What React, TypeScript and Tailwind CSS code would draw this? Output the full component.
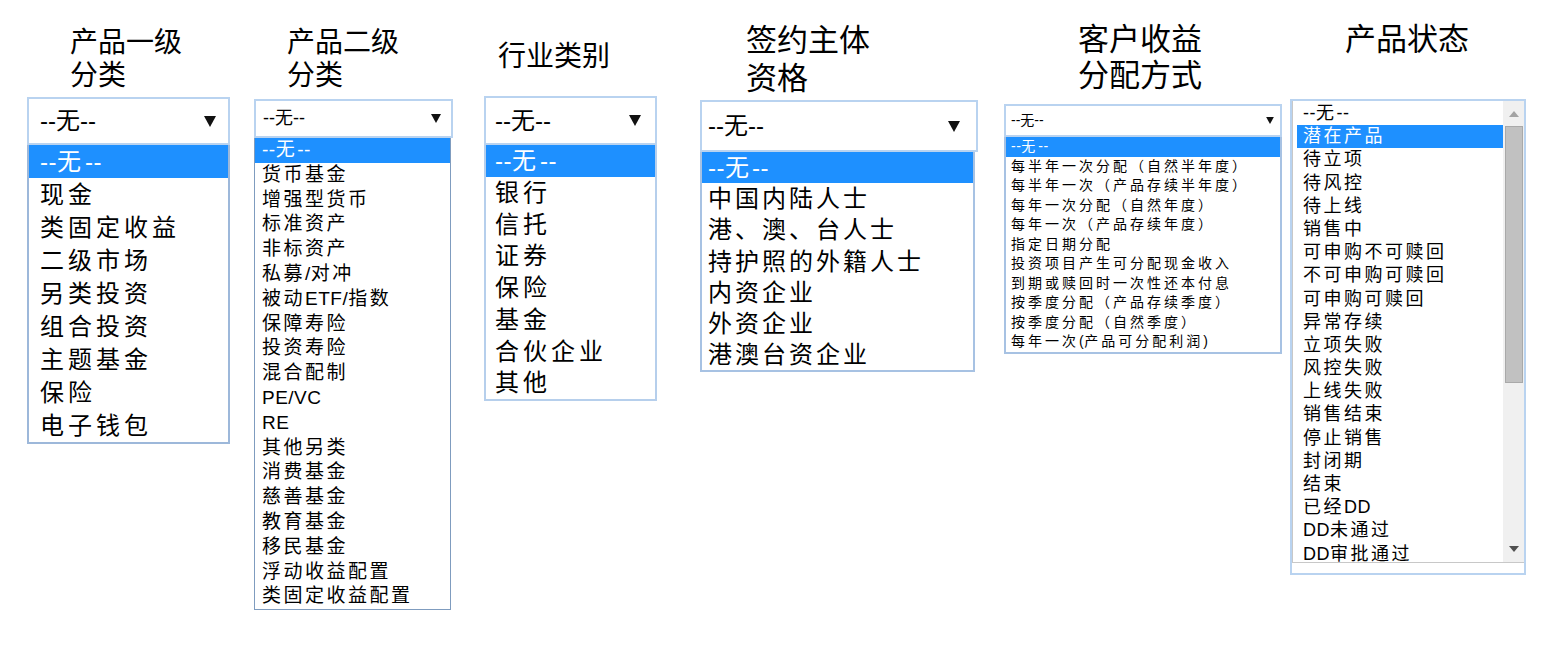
import React from 'react';

type Col = {
  key: string;
  title: string[];
  titleCls: string;
  options?: string[];
  selectCls?: string;
  arrowCls?: string;
  listCls?: string;
  rowCls?: string;
  colCls: string;
};

const ARROW = (
  <svg viewBox="0 0 10 9" className="w-full h-full">
    <path d="M0 0 L10 0 L5 9 Z" fill="#111" />
  </svg>
);

const COLS: Col[] = [
  {
    key: 'c1',
    title: ['产品一级', '分类'],
    titleCls: 'h-[97px] pt-[24px] pl-[43px] text-[28px] leading-[33px]',
    options: ['--无--', '现金', '类固定收益', '二级市场', '另类投资', '组合投资', '主题基金', '保险', '电子钱包'],
    selectCls: 'h-[48px] pl-[11px] pr-[12px] text-[24px] border-2 border-[#b9d3f0]',
    arrowCls: 'w-[12px] h-[11px]',
    listCls: 'border-2 border-t-0 border-[#9db8da]',
    rowCls: 'h-[33px] leading-[33px] pl-[11px] text-[24px] tracking-[4px]',
    colCls: 'w-[203px] mr-[24px]',
  },
  {
    key: 'c2',
    title: ['产品二级', '分类'],
    titleCls: 'h-[99px] pt-[24px] pl-[33px] text-[28px] leading-[33px]',
    options: [
      '--无--', '货币基金', '增强型货币', '标准资产', '非标资产', '私募/对冲', '被动ETF/指数', '保障寿险',
      '投资寿险', '混合配制', 'PE/VC', 'RE', '其他另类', '消费基金', '慈善基金', '教育基金', '移民基金',
      '浮动收益配置', '类固定收益配置',
    ],
    selectCls: 'h-[39px] pl-[7px] pr-[10px] text-[18px] border-2 border-[#b9d3f0]',
    arrowCls: 'w-[10px] h-[9px]',
    listCls: 'mr-[2px] border border-t-0 border-[#7f9cbf]',
    rowCls: 'h-[24.8px] leading-[24.8px] pl-[7px] text-[19px] tracking-[2.5px]',
    colCls: 'w-[199px] mr-[31px]',
  },
  {
    key: 'c3',
    title: ['行业类别'],
    titleCls: 'h-[96px] pt-[38px] pl-[14px] text-[28px] leading-[33px]',
    options: ['--无--', '银行', '信托', '证券', '保险', '基金', '合伙企业', '其他'],
    selectCls: 'h-[49px] pl-[9px] pr-[14px] text-[24px] border-2 border-[#b9d3f0]',
    arrowCls: 'w-[12px] h-[11px]',
    listCls: 'border-2 border-t-0 border-[#b6cfec]',
    rowCls: 'h-[31.75px] leading-[31.75px] pl-[9px] text-[24px] tracking-[4px]',
    colCls: 'w-[173px] mr-[43px]',
  },
  {
    key: 'c4',
    title: ['签约主体', '资格'],
    titleCls: 'h-[100px] pt-[19px] pl-[46px] text-[31px] leading-[38px]',
    options: ['--无--', '中国内陆人士', '港、澳、台人士', '持护照的外籍人士', '内资企业', '外资企业', '港澳台资企业'],
    selectCls: 'h-[52px] pl-[6px] pr-[16px] text-[24px] border-2 border-[#b9d3f0]',
    arrowCls: 'w-[12px] h-[11px]',
    listCls: 'mr-[3px] border-2 border-t-0 border-[#a7c2e3]',
    rowCls: 'h-[31.2px] leading-[31.2px] pl-[6px] text-[24px] tracking-[3px]',
    colCls: 'w-[278px] mr-[26px]',
  },
  {
    key: 'c5',
    title: ['客户收益', '分配方式'],
    titleCls: 'h-[104px] pt-[19px] pl-[74px] text-[31px] leading-[36px]',
    options: [
      '--无--', '每半年一次分配（自然半年度）', '每半年一次（产品存续半年度）', '每年一次分配（自然年度）',
      '每年一次（产品存续年度）', '指定日期分配', '投资项目产生可分配现金收入', '到期或赎回时一次性还本付息',
      '按季度分配（产品存续季度）', '按季度分配（自然季度）', '每年一次(产品可分配利润)',
    ],
    selectCls: 'h-[33px] pl-[5px] pr-[6px] text-[14px] border-2 border-[#b9d3f0]',
    arrowCls: 'w-[8px] h-[7px]',
    listCls: 'border-2 border-t-0 border-[#a7c2e3]',
    rowCls: 'h-[19.5px] leading-[19.5px] pl-[5px] text-[14px] tracking-[3px]',
    colCls: 'w-[278px] mr-[8px]',
  },
];

const STATUS = [
  '--无--', '潜在产品', '待立项', '待风控', '待上线', '销售中', '可申购不可赎回', '不可申购可赎回', '可申购可赎回',
  '异常存续', '立项失败', '风控失败', '上线失败', '销售结束', '停止销售', '封闭期', '结束', '已经DD', 'DD未通过',
  'DD审批通过',
];

const FONT = "font-['Liberation_Sans','Noto_Sans_CJK_SC',sans-serif]";

// latin runs and dashes are set tight, CJK keeps the wide spacing
function Label({ text }: { text: string }) {
  const parts = text.split(/([A-Za-z\-\/()]+)/).filter(Boolean);
  return (
    <>
      {parts.map((p, i) =>
        /^[A-Za-z\-\/()]+$/.test(p) ? (
          <span key={i} className="tracking-[0.5px]">{p}</span>
        ) : (
          <span key={i}>{p}</span>
        ),
      )}
    </>
  );
}

function DropdownColumn({ col }: { col: Col }) {
  const opts = col.options ?? [];
  return (
    <div className={`flex flex-col shrink-0 ${col.colCls}`}>
      <div className={`font-['Noto_Sans_CJK_SC',sans-serif] text-black ${col.titleCls}`}>
        {col.title[0]}
        {col.title[1] && <br />}
        {col.title[1]}
      </div>

      {/* closed select */}
      <div className={`flex items-center justify-between bg-white text-black ${FONT} ${col.selectCls}`}>
        <span>--无--</span>
        <span className={`block ${col.arrowCls}`}>{ARROW}</span>
      </div>

      {/* open list */}
      <div className={`bg-white ${FONT} ${col.listCls}`}>
        {opts.map((o, i) => (
          <div
            key={o}
            className={`whitespace-nowrap ${col.rowCls} ${i === 0 ? 'bg-[#1e90ff] text-white' : 'text-black'}`}
          >
            <Label text={o} />
          </div>
        ))}
      </div>
    </div>
  );
}

function StatusColumn() {
  return (
    <div className="flex flex-col shrink-0 w-[236px]">
      <div className="h-[99px] pt-[19px] pl-[55px] text-[31px] leading-[36px] font-['Noto_Sans_CJK_SC',sans-serif] text-black">
        产品状态
      </div>
      <div className="h-[476px] border-2 border-[#b9d3f0] bg-white flex flex-col">
        <div className="flex h-[462px] border-l border-b border-[#c8c8c8]">
          <div className={`flex-1 pt-[1px] pl-[4px] ${FONT}`}>
            {STATUS.map((s, i) => (
              <div
                key={s}
                className={`h-[23.2px] leading-[23.2px] pl-[6px] text-[18px] tracking-[2.5px] whitespace-nowrap ${
                  i === 1 ? 'bg-[#1e90ff] text-white' : 'text-black'
                }`}
              >
                <Label text={s} />
              </div>
            ))}
          </div>
          {/* scrollbar */}
          <div className="w-[21px] bg-[#f0f0f0] flex flex-col items-center">
            <div className="h-[25px] flex items-center justify-center">
              <svg viewBox="0 0 10 6" className="w-[10px] h-[6px]">
                <path d="M0 6 L5 0 L10 6 Z" fill="#a3a3a3" />
              </svg>
            </div>
            <div className="w-[18px] h-[257px] bg-[#c1c1c1] border border-[#a9a9a9]" />
            <div className="flex-1" />
            <div className="h-[26px] flex items-center justify-center">
              <svg viewBox="0 0 10 6" className="w-[10px] h-[6px]">
                <path d="M0 0 L10 0 L5 6 Z" fill="#505050" />
              </svg>
            </div>
          </div>
        </div>
      </div>
    </div>
  );
}

export default function App() {
  return (
    <div className="w-[1554px] h-[652px] bg-white overflow-hidden">
      <div className="flex items-start pl-[27px]">
        {COLS.map(c => (
          <DropdownColumn key={c.key} col={c} />
        ))}
        <StatusColumn />
      </div>
    </div>
  );
}
